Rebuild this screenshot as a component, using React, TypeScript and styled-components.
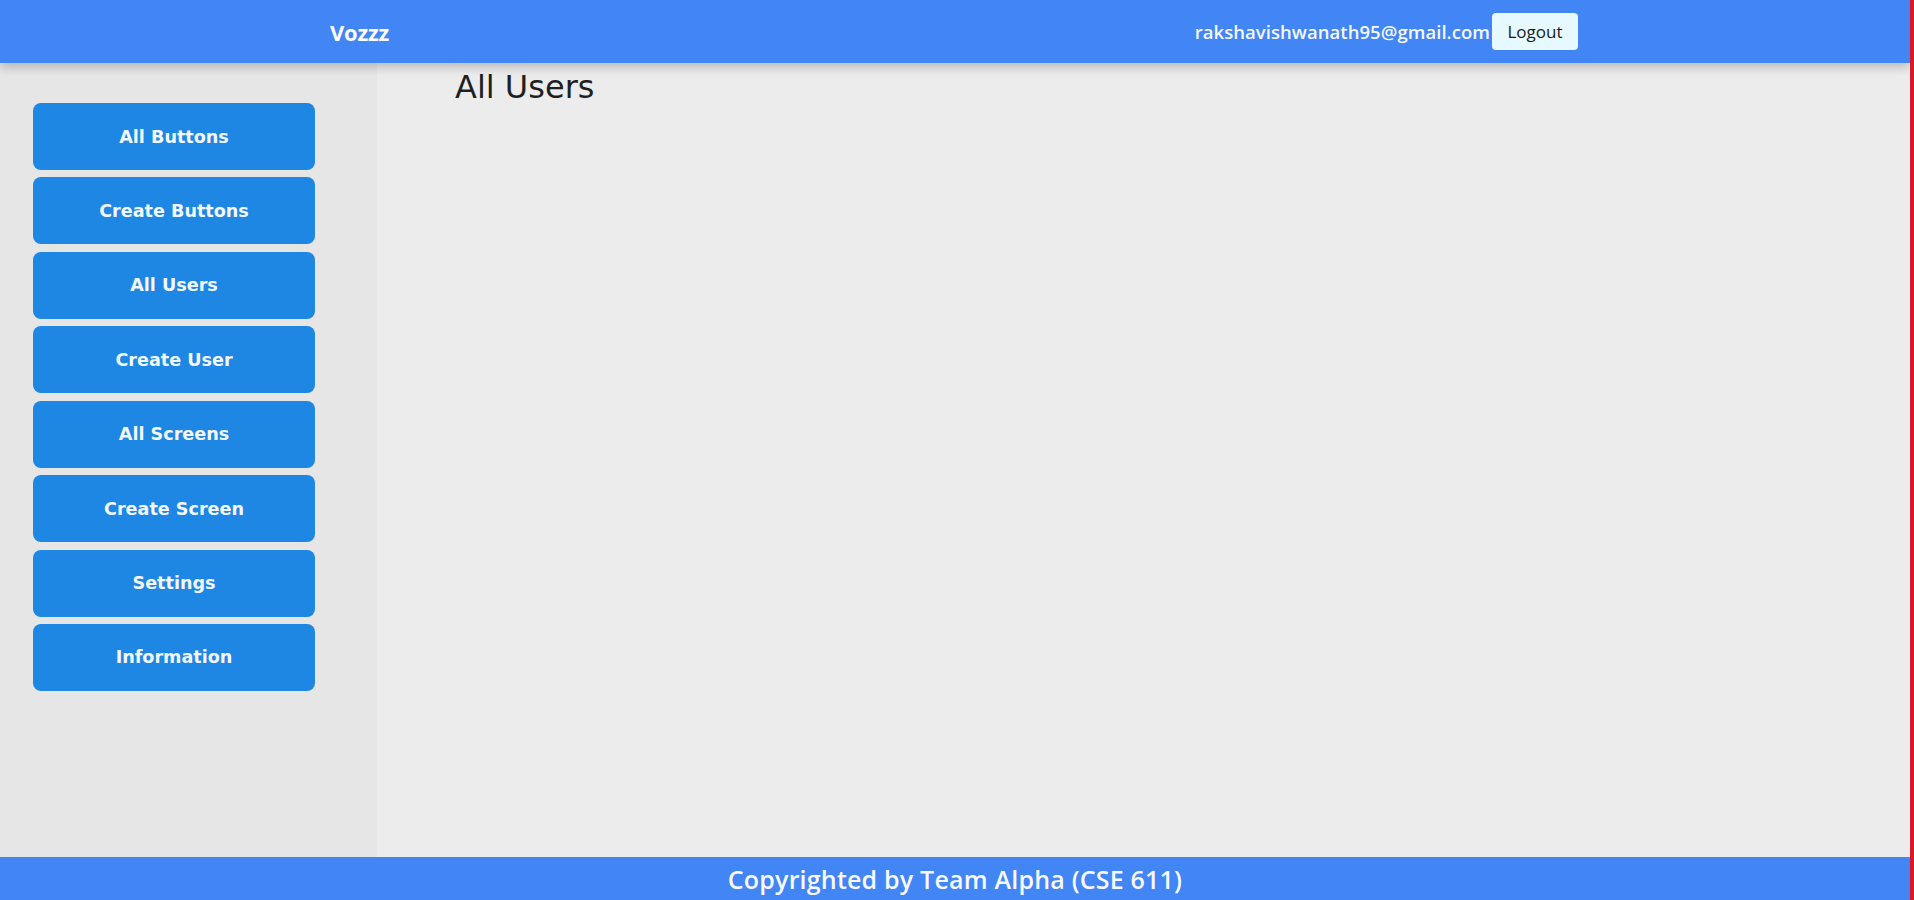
import React from "react";
import styled, { createGlobalStyle } from "styled-components";

const GlobalStyle = createGlobalStyle`
  html, body {
    margin: 0;
    padding: 0;
    height: 100%;
  }
  body {
    font-family: "DejaVu Sans", Verdana, sans-serif;
    background: #ececec;
  }
  #root {
    height: 100%;
  }
`;

const Page = styled.div`
  display: flex;
  flex-direction: column;
  height: 900px;
  box-sizing: border-box;
  border-right: 4px solid #d71a26;
  background: #ececec;
  overflow: hidden;
`;

const Header = styled.header`
  position: relative;
  z-index: 2;
  flex: 0 0 63px;
  display: flex;
  align-items: center;
  justify-content: space-between;
  padding: 0 332px 0 330px;
  background: #4285f4;
  box-shadow: 0 4px 10px rgba(0, 0, 0, 0.22);
`;

const Brand = styled.div`
  font-family: "Open Sans", "Noto Sans", sans-serif;
  font-weight: 700;
  font-size: 22px;
  letter-spacing: -0.2px;
  color: #ffffff;
`;

const UserBox = styled.div`
  display: flex;
  align-items: center;
  gap: 2px;
`;

const Email = styled.span`
  font-family: "Open Sans", "Noto Sans", sans-serif;
  font-weight: 600;
  font-size: 18.5px;
  letter-spacing: 0.05px;
  color: #f4f8ff;
`;

const LogoutButton = styled.button`
  width: 86px;
  height: 37px;
  padding: 0;
  border: none;
  border-radius: 4px;
  background: #e6f9ff;
  color: #1a1a1a;
  font-family: "Open Sans", "Noto Sans", sans-serif;
  font-size: 17px;
  cursor: pointer;
`;

const Body = styled.div`
  flex: 1;
  display: flex;
  min-height: 0;
`;

const Sidebar = styled.nav`
  flex: 0 0 377px;
  box-sizing: border-box;
  padding: 40px 0 0 33px;
  background: #e6e6e6;
  display: flex;
  flex-direction: column;
  gap: 7.43px;
`;

const NavButton = styled.button`
  width: 282px;
  height: 67px;
  border: none;
  border-radius: 8px;
  background: #1e86e3;
  color: #f2f8ff;
  font-family: "DejaVu Sans", Verdana, sans-serif;
  font-weight: 700;
  font-size: 17.6px;
  cursor: pointer;
`;

const Main = styled.main`
  flex: 1;
  padding: 0 0 0 78px;
  background: #ececec;
`;

const Title = styled.h1`
  margin: 5px 0 0;
  font-family: "DejaVu Sans", Verdana, sans-serif;
  font-weight: 400;
  font-size: 32px;
  color: #1f1f1f;
`;

const Footer = styled.footer`
  flex: 0 0 43px;
  display: flex;
  align-items: center;
  justify-content: center;
  background: #4285f4;
  color: #f7f9ff;
  font-family: "Open Sans", "Noto Sans", sans-serif;
  font-weight: 600;
  font-size: 25px;
  letter-spacing: 0.2px;
`;

const navItems = [
  "All Buttons",
  "Create Buttons",
  "All Users",
  "Create User",
  "All Screens",
  "Create Screen",
  "Settings",
  "Information",
];

export default function App() {
  return (
    <>
      <GlobalStyle />
      <Page>
        <Header>
          <Brand>Vozzz</Brand>
          <UserBox>
            <Email>rakshavishwanath95@gmail.com</Email>
            <LogoutButton>Logout</LogoutButton>
          </UserBox>
        </Header>
        <Body>
          <Sidebar>
            {navItems.map((item) => (
              <NavButton key={item}>{item}</NavButton>
            ))}
          </Sidebar>
          <Main>
            <Title>All Users</Title>
          </Main>
        </Body>
        <Footer>Copyrighted by Team Alpha (CSE 611)</Footer>
      </Page>
    </>
  );
}
